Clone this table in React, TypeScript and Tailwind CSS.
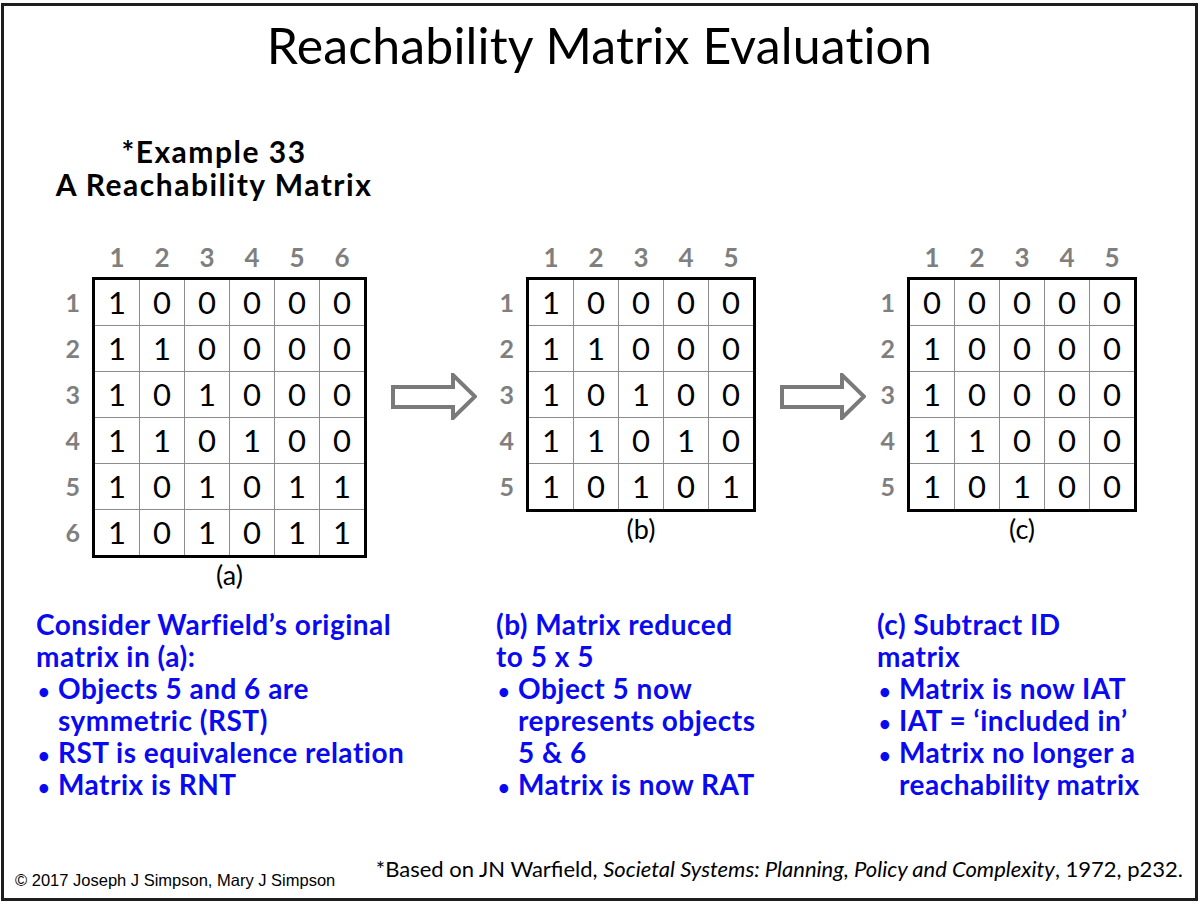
import React from "react";

const matA = ["100000", "110000", "101000", "110100", "101011", "101011"];
const matB = ["10000", "11000", "10100", "11010", "10101"];
const matC = ["00000", "10000", "10000", "11000", "10100"];

const Arrow = () => (
  <svg width="86" height="47" viewBox="0 0 86 47" className="shrink-0">
    <polygon
      points="2,14 62,14 62,2 84,23.5 62,45 62,34 2,34"
      fill="white"
      stroke="#7a7a7a"
      strokeWidth="4"
      strokeLinejoin="miter"
    />
  </svg>
);

const Matrix = ({ rows, label }: { rows: string[]; label: string }) => {
  const n = rows.length;
  return (
    <div className="flex shrink-0">
      <div className="flex flex-col gap-px pt-[36px] pr-3 w-[32px]">
        {rows.map((_, i) => (
          <div
            key={i}
            className="h-[45px] flex items-center justify-end text-[25px] font-bold text-[#7f7f7f] leading-none"
          >
            {i + 1}
          </div>
        ))}
      </div>
      <div className="flex flex-col">
        <div className="flex gap-px px-[3px] h-[24px] mb-[9px]">
          {rows.map((_, i) => (
            <div key={i} className="w-[44px] text-center text-[26px] font-bold text-[#7f7f7f] leading-none">
              {i + 1}
            </div>
          ))}
        </div>
        <div
          className={
            (n === 6 ? "grid-cols-6" : "grid-cols-5") +
            " grid gap-px bg-[#8c8c8c] border-[3px] border-black"
          }
        >
          {rows.map((r, i) =>
            r.split("").map((d, j) => (
              <div
                key={i + "-" + j}
                className="w-[44px] h-[45px] bg-white flex items-center justify-center text-[31px] leading-none text-black"
              >
                {d}
              </div>
            ))
          )}
        </div>
        <div className="mt-[3px] text-center text-[27px] leading-none text-black">({label})</div>
      </div>
    </div>
  );
};

const Bullet = ({ children }: { children: React.ReactNode }) => (
  <div className="flex">
    <span className="w-[22px] shrink-0 pl-[2px] text-[20px] leading-[32px] translate-y-[3px]">•</span>
    <span>{children}</span>
  </div>
);

export default function App() {
  return (
    <div className="w-[1200px] h-[904px] bg-white font-['Lato',sans-serif]">
      <div className="ml-px mt-[3px] w-[1197px] h-[898px] border-[3px] border-[#1e1e1e] flex flex-col">
        <h1 className="mt-[14px] text-center text-[50px] tracking-[0.15px] leading-none text-black">
          Reachability Matrix Evaluation
        </h1>

        <div className="mt-[65px] w-[420px] text-center text-[30px] tracking-[1.5px] leading-[33px] font-bold text-black">
          <div>*Example 33</div>
          <div>A Reachability Matrix</div>
        </div>

        <div className="mt-[43px] flex items-start">
          <div className="ml-[56px]">
            <Matrix rows={matA} label="a" />
          </div>
          <div className="ml-[24px] mt-[129px]">
            <Arrow />
          </div>
          <div className="ml-[17px]">
            <Matrix rows={matB} label="b" />
          </div>
          <div className="ml-[24px] mt-[129px]">
            <Arrow />
          </div>
          <div className="ml-[9px]">
            <Matrix rows={matC} label="c" />
          </div>
        </div>

        <div className="mt-[20px] pl-[32px] grid grid-cols-[460px_381px_1fr] text-[28px] tracking-[0.5px] leading-[32px] font-bold text-[#0a0af0]">
          <div>
            <div>Consider Warfield’s original</div>
            <div>matrix in (a):</div>
            <Bullet>
              Objects 5 and 6 are
              <br />
              symmetric (RST)
            </Bullet>
            <Bullet>RST is equivalence relation</Bullet>
            <Bullet>Matrix is RNT</Bullet>
          </div>
          <div>
            <div>(b) Matrix reduced</div>
            <div>to 5 x 5</div>
            <Bullet>
              Object 5 now
              <br />
              represents objects
              <br />5 &amp; 6
            </Bullet>
            <Bullet>Matrix is now RAT</Bullet>
          </div>
          <div>
            <div>(c) Subtract ID</div>
            <div>matrix</div>
            <Bullet>Matrix is now IAT</Bullet>
            <Bullet>IAT = ‘included in’</Bullet>
            <Bullet>
              Matrix no longer a
              <br />
              reachability matrix
            </Bullet>
          </div>
        </div>

        <div className="mt-auto flex items-end justify-between pl-[11px] pr-[12px] pb-[10px]">
          <div className="font-['Liberation_Sans',sans-serif] text-[16.5px] leading-none text-black">
            © 2017 Joseph J Simpson, Mary J Simpson
          </div>
          <div className="mb-[8px] text-[22px] leading-none text-black">
            *Based on JN Warfield, <i>Societal Systems: Planning, Policy and Complexity</i>, 1972, p232.
          </div>
        </div>
      </div>
    </div>
  );
}
